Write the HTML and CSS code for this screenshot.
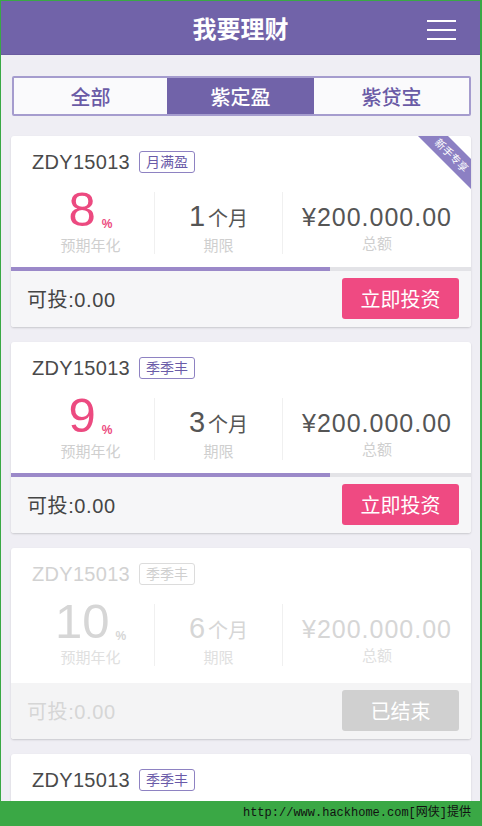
FILE: index.html
```html
<!DOCTYPE html>
<html lang="zh-CN">
<head>
<meta charset="utf-8">
<title>我要理财</title>
<link rel="stylesheet" href="styles.css">
</head>
<body>
<div class="frame">
  <header class="topbar">
    <h1 class="title">我要理财</h1>
    <div class="menu"><span></span><span></span><span></span></div>
  </header>

  <nav class="tabs">
    <div class="tab">全部</div>
    <div class="tab active">紫定盈</div>
    <div class="tab">紫贷宝</div>
  </nav>

  <main class="list">
    <section class="card">
      <svg class="ribbon" width="53" height="53" viewBox="0 0 53 53">
        <polygon points="0,0 30,0 53,23 53,53" fill="#8c80c3"/>
        <text x="33" y="23" transform="rotate(45 33 20)" text-anchor="middle" font-size="10.5" fill="#fff" font-family="Noto Sans CJK SC, sans-serif">新手专享</text>
      </svg>
      <div class="head"><span class="code">ZDY15013</span><span class="tag">月满盈</span></div>
      <div class="stats">
        <div class="col"><div class="val"><span class="rate">8</span><span class="pct">%</span></div><div class="lbl">预期年化</div></div>
        <div class="col sep"><div class="val"><span class="num">1</span><span class="unit">个月</span></div><div class="lbl">期限</div></div>
        <div class="col sep"><div class="val"><span class="amt">¥200.000.00</span></div><div class="lbl">总额</div></div>
      </div>
      <div class="bar"><div class="fill" style="width:69.3%"></div></div>
      <div class="foot"><span class="avail">可投:0.00</span><button class="btn">立即投资</button></div>
    </section>

    <section class="card">
      <div class="head"><span class="code">ZDY15013</span><span class="tag">季季丰</span></div>
      <div class="stats">
        <div class="col"><div class="val"><span class="rate">9</span><span class="pct">%</span></div><div class="lbl">预期年化</div></div>
        <div class="col sep"><div class="val"><span class="num">3</span><span class="unit">个月</span></div><div class="lbl">期限</div></div>
        <div class="col sep"><div class="val"><span class="amt">¥200.000.00</span></div><div class="lbl">总额</div></div>
      </div>
      <div class="bar"><div class="fill" style="width:69.3%"></div></div>
      <div class="foot"><span class="avail">可投:0.00</span><button class="btn">立即投资</button></div>
    </section>

    <section class="card done">
      <div class="head"><span class="code">ZDY15013</span><span class="tag">季季丰</span></div>
      <div class="stats">
        <div class="col"><div class="val"><span class="rate">10</span><span class="pct">%</span></div><div class="lbl">预期年化</div></div>
        <div class="col sep"><div class="val"><span class="num">6</span><span class="unit">个月</span></div><div class="lbl">期限</div></div>
        <div class="col sep"><div class="val"><span class="amt">¥200.000.00</span></div><div class="lbl">总额</div></div>
      </div>
      <div class="bar"></div>
      <div class="foot"><span class="avail">可投:0.00</span><button class="btn">已结束</button></div>
    </section>

    <section class="card partial">
      <div class="head"><span class="code">ZDY15013</span><span class="tag">季季丰</span></div>
    </section>
  </main>
</div>
<div class="watermark">http://www.hackhome.com[网侠]提供</div>
</body>
</html>
```

FILE: styles.css
```css
html {
  background: #3aa845;
}
body {
  margin: 0;
  font-family: "Liberation Sans", "Noto Sans CJK SC", sans-serif;
  height: 826px;
  overflow: hidden;
}
.frame {
  margin: 1px 2px 0 1px;
  background: #efeef4;
  height: 825px;
  overflow: hidden;
}
.topbar {
  height: 54px;
  background: #7163a9;
  display: flex;
  align-items: center;
  justify-content: center;
  position: relative;
  border-bottom: 1px solid #6a5b9f;
  box-sizing: border-box;
}
.title {
  margin: 0;
  color: #fff;
  font-size: 24px;
  font-weight: bold;
}
.menu {
  position: absolute;
  right: 24px;
  top: 19px;
  width: 29px;
  display: flex;
  flex-direction: column;
  gap: 7px;
}
.menu span {
  display: block;
  height: 2px;
  background: #fff;
}
.tabs {
  margin: 21px 9px 0 11px;
  height: 40px;
  display: grid;
  grid-template-columns: 154fr 148fr 156fr;
  border: 2px solid #a59cce;
  border-radius: 2px;
  background: #fafafc;
  box-sizing: border-box;
}
.tab {
  display: flex;
  align-items: center;
  justify-content: center;
  color: #6a5ba6;
  font-size: 20px;
  font-weight: 500;
}
.tab.active {
  background: #7163a9;
  color: #fff;
}
.list {
  padding: 20px 9px 0 10px;
  display: flex;
  flex-direction: column;
  gap: 15px;
}
.card {
  position: relative;
  background: #fff;
  border-radius: 3px;
  box-shadow: 0 1px 2px rgba(0, 0, 0, 0.16);
  overflow: hidden;
  padding-top: 15px;
}
.card.partial {
  padding-bottom: 60px;
}
.ribbon {
  position: absolute;
  top: 0;
  right: 0;
}
.head {
  height: 22px;
  display: flex;
  align-items: center;
  padding-left: 21px;
}
.code {
  font-size: 20px;
  letter-spacing: 0.3px;
  color: #4a4a4a;
}
.tag {
  margin-left: 9px;
  height: 22px;
  box-sizing: border-box;
  border: 1px solid #8e82c2;
  border-radius: 3px;
  padding: 0 6px;
  font-size: 14px;
  line-height: 20px;
  color: #6a5ba8;
}
.stats {
  display: grid;
  grid-template-columns: 127px 128px 1fr;
  padding: 19px 0 13px 16px;
}
.col {
  height: 62px;
  display: flex;
  flex-direction: column;
  align-items: center;
}
.col.sep {
  border-left: 1px solid #f0f0f0;
}
.val {
  height: 44px;
  font-size: 49px;
  line-height: 34px;
  white-space: nowrap;
  text-align: center;
}
.rate {
  font-size: 49px;
  color: #ec4a80;
}
.pct {
  font-size: 12px;
  font-weight: bold;
  color: #ec4a80;
  margin-left: 6px;
  vertical-align: -2px;
}
.num {
  font-size: 29px;
  color: #555;
}
.unit {
  font-size: 20px;
  color: #555;
  margin-left: 3px;
}
.amt {
  font-size: 25px;
  letter-spacing: 1px;
  color: #555;
}
.lbl {
  font-size: 15px;
  line-height: 20px;
  color: #cfcfcf;
}
.bar {
  height: 4px;
  background: #e3e3e7;
}
.fill {
  height: 100%;
  background: #9b89c9;
}
.foot {
  background: #f6f6f8;
  padding: 7px 12px 8px 16px;
  display: flex;
  align-items: center;
  justify-content: space-between;
}
.avail {
  font-size: 20px;
  color: #454545;
  letter-spacing: 0.6px;
}
.btn {
  width: 117px;
  height: 41px;
  border: none;
  border-radius: 3px;
  background: #ef4a82;
  color: #fff;
  font-family: inherit;
  font-size: 20px;
  padding: 0;
}
.done .code { color: #d2d2d2; }
.done .tag { border-color: #dcdcdc; color: #cfcfcf; }
.done .rate,
.done .pct { color: #d6d6d6; }
.done .num,
.done .unit,
.done .amt { color: #d6d6d6; }
.done .lbl { color: #e0e0e0; }
.done .bar { background: #fff; }
.done .foot { background: #f4f4f5; }
.done .avail { color: #d6d6d6; }
.done .btn { background: #d0d0d0; }
.watermark {
  position: fixed;
  left: 0;
  right: 0;
  bottom: 0;
  height: 25px;
  background: #3aa845;
  color: #111;
  font-family: "Liberation Mono", "Noto Sans CJK SC", monospace;
  font-size: 12px;
  line-height: 25px;
  text-align: right;
  padding-right: 11px;
}
```
